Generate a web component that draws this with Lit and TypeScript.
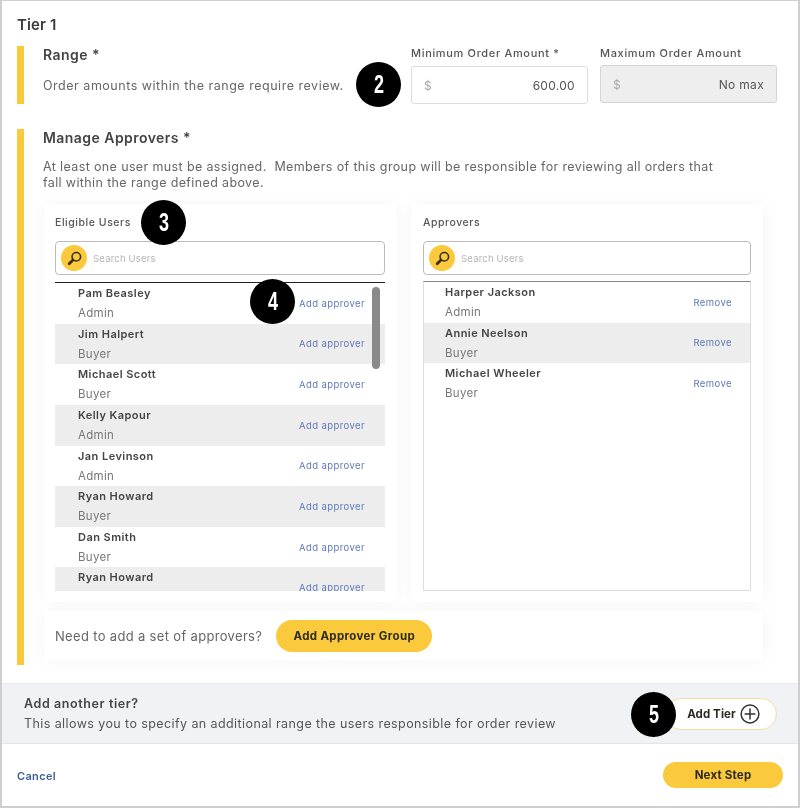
import { LitElement, html, css, svg } from "lit";
import { customElement } from "lit/decorators.js";

const ELIGIBLE = [
  ["Pam Beasley", "Admin"],
  ["Jim Halpert", "Buyer"],
  ["Michael Scott", "Buyer"],
  ["Kelly Kapour", "Admin"],
  ["Jan Levinson", "Admin"],
  ["Ryan Howard", "Buyer"],
  ["Dan Smith", "Buyer"],
  ["Ryan Howard", "Buyer"],
];
const APPROVERS = [
  ["Harper Jackson", "Admin"],
  ["Annie Neelson", "Buyer"],
  ["Michael Wheeler", "Buyer"],
];

const searchIcon = svg`<svg viewBox="0 0 16 16" width="17" height="17" fill="none" stroke="#3a2f14">
  <circle cx="9.7" cy="6.3" r="4" stroke-width="1.5"/>
  <path d="M6.6 9.4 3 13" stroke-width="2.6" stroke-linecap="round"/>
</svg>`;

const plusIcon = svg`<svg viewBox="0 0 20 20" width="20" height="20" fill="none" stroke="#333" stroke-width="1.5">
  <circle cx="10" cy="10" r="8.9"/>
  <path d="M10 4.6v10.8M4.6 10h10.8"/>
</svg>`;

@customElement("app-root")
export class AppRoot extends LitElement {
  static styles = css`
    :host { display: block; width: 800px; height: 808px; }
    * { box-sizing: border-box; }
    .page {
      position: relative; width: 800px; height: 808px; overflow: hidden;
      display: flex; flex-direction: column; background: #fff;
      border: 2px solid #cfcfcf; border-top-width: 1px;
      font-family: Inter, "Open Sans", sans-serif; color: #444;
    }
    .content { flex: 1; display: flex; flex-direction: column; filter: blur(0.45px); }
    .main { padding: 14px 0 0 15px; height: 682px; }
    .tier { font-size: 15px; font-weight: 600; line-height: 20px; color: #3c3c3c; letter-spacing: .1px; }
    .section { border-left: 7px solid #fbc93c; padding-left: 19px; }
    .range { margin-top: 11px; height: 58px; display: flex; }
    .range-text { width: 368px; }
    h3 { margin: 0; font-size: 14px; font-weight: 600; line-height: 18px; color: #444; letter-spacing: .45px; }
    .range-text p { margin: 13px 0 0; font-size: 12.5px; line-height: 18px; color: #666; letter-spacing: .52px; white-space: nowrap; }
    .fields { display: flex; gap: 12px; }
    .field { width: 177px; }
    .field label { display: block; font-size: 11px; line-height: 14px; color: #555; letter-spacing: .66px; white-space: nowrap; font-weight: 500; }
    .input {
      margin-top: 6px; height: 38px; border: 1px solid #ddd; border-radius: 3px;
      display: flex; align-items: center; justify-content: space-between; padding: 0 12px;
      font-size: 12px; color: #555; background: #fff; letter-spacing: .3px;
    }
    .input.off { margin-top: 5px; background: #eee; border-color: #d4d4d4; }
    .dollar { color: #aaa; }
    .manage { margin-top: 25px; height: 536px; }
    .manage > p { margin: 12px 0 0; width: 680px; font-size: 12.5px; line-height: 16px; color: #666; letter-spacing: .37px; }
    .cards {
      margin: 13px 0 0 1px; display: grid; grid-template-columns: 353px 352px; gap: 14px;
    }
    .card, .group { background: #fff; border-radius: 4px; box-shadow: 0 0 18px rgba(0,0,0,.045); }
    .card { height: 398px; padding: 12px 12px 11px 11px; display: flex; flex-direction: column; }
    .card.right { padding-left: 12px; }
    .card-title { font-size: 10.5px; line-height: 14px; color: #555; letter-spacing: .55px; font-weight: 500; }
    .search {
      margin-top: 11px; height: 34px; flex: none; border: 1px solid #bbb; border-radius: 4px;
      display: flex; align-items: center; gap: 6px; padding-left: 5px;
      font-size: 9.5px; color: #b5b5b5; letter-spacing: .2px;
    }
    .search-btn {
      width: 26px; height: 26px; border-radius: 50%; background: #fbc93c;
      display: flex; align-items: center; justify-content: center;
    }
    .list { margin-top: 7px; height: 309px; border-top: 1px solid #222; overflow: hidden; position: relative; }
    .card.right .list { margin-top: 6px; height: 310px; border: 1px solid #ddd; border-top: 1px solid #888; }
    .row {
      height: 40.65px; display: flex; align-items: center; justify-content: space-between;
      padding: 0 20px 0 23px;
    }
    .card.right .row { padding: 0 18px 0 21px; }
    .row:nth-child(even) { background: #ededed; }
    .who { align-self: flex-start; }
    .name { font-size: 11px; line-height: 20px; font-weight: 600; color: #444; letter-spacing: .45px; }
    .role { font-size: 11.5px; line-height: 20px; color: #777; letter-spacing: .3px; }
    .act { font-size: 9.5px; color: #5f78b8; letter-spacing: .42px; }
    .scroll { position: absolute; right: 5px; top: 4px; width: 8px; height: 82px; border-radius: 4px; background: #8a8a8a; }
    .group {
      margin: 9px 0 0 1px; width: 719px; height: 50px; padding-left: 11px;
      display: flex; align-items: center; gap: 14px;
      font-size: 13px; color: #666; letter-spacing: .33px;
    }
    button {
      font: inherit; border: none; background: #fbc93c; color: #2c2a22; font-weight: 700; border-radius: 16px;
      padding: 0; display: flex; align-items: center; justify-content: center;
    }
    .group button { width: 156px; height: 32px; font-size: 11.5px; letter-spacing: .35px; }
    .band {
      height: 61px; background: #f1f2f6; padding: 0 21px 0 22px;
      border-top: 1px solid #e9eaee; border-bottom: 1px solid #e4e5e8;
      display: flex; align-items: center; justify-content: space-between;
    }
    .band b { display: block; font-size: 12.5px; line-height: 20px; font-weight: 600; color: #444; letter-spacing: .6px; }
    .band span { display: block; font-size: 12.5px; line-height: 19px; color: #555; letter-spacing: .41px; }
    .add-tier {
      width: 112px; height: 32px; background: #fff; border: 1px solid #f3dfa3; gap: 4px; font-size: 11.5px; padding-left: 5px;
      letter-spacing: .1px;
    }
    .foot { flex: 1; display: flex; align-items: center; justify-content: space-between; padding: 0 15px; }
    .cancel { font-size: 11px; font-weight: 600; color: #3d5f96; letter-spacing: .35px; padding-top: 2px; }
    .next { width: 120px; height: 26px; font-size: 11.5px; letter-spacing: .2px; }
    .badge {
      position: absolute; width: 45px; height: 45px; border-radius: 50%; background: #000; color: #fff;
      display: flex; align-items: center; justify-content: center;
      font-family: "Liberation Sans", sans-serif; font-weight: 700; font-size: 25px;
    }
    .badge span { display: inline-block; transform: scaleX(.72); }
    .b2 { left: 354px; top: 61px; }
    .b3 { left: 139px; top: 199px; }
    .b4 { left: 248px; top: 278px; }
    .b5 { left: 629px; top: 691px; }
  `;

  private rows(items: string[][], action: string) {
    return items.map(
      ([n, r]) => html`<div class="row">
        <div class="who"><div class="name">${n}</div><div class="role">${r}</div></div>
        <div class="act">${action}</div>
      </div>`
    );
  }

  private search() {
    return html`<div class="search"><div class="search-btn">${searchIcon}</div>Search Users</div>`;
  }

  render() {
    return html`<div class="page">
      <div class="content">
        <div class="main">
          <div class="tier">Tier 1</div>
          <div class="section range">
            <div class="range-text">
              <h3>Range *</h3>
              <p>Order amounts within the range require review.</p>
            </div>
            <div class="fields">
              <div class="field">
                <label>Minimum Order Amount *</label>
                <div class="input"><span class="dollar">$</span><span>600.00</span></div>
              </div>
              <div class="field">
                <label>Maximum Order Amount</label>
                <div class="input off"><span class="dollar">$</span><span>No max</span></div>
              </div>
            </div>
          </div>
          <div class="section manage">
            <h3>Manage Approvers *</h3>
            <p>At least one user must be assigned.&nbsp; Members of this group will be responsible for reviewing all orders that fall within the range defined above.</p>
            <div class="cards">
              <div class="card">
                <div class="card-title">Eligible Users</div>
                ${this.search()}
                <div class="list">
                  ${this.rows(ELIGIBLE, "Add approver")}
                  <div class="scroll"></div>
                </div>
              </div>
              <div class="card right">
                <div class="card-title">Approvers</div>
                ${this.search()}
                <div class="list">${this.rows(APPROVERS, "Remove")}</div>
              </div>
            </div>
            <div class="group">Need to add a set of approvers? <button>Add Approver Group</button></div>
          </div>
        </div>
        <div class="band">
          <div>
            <b>Add another tier?</b>
            <span>This allows you to specify an additional range the users responsible for order review</span>
          </div>
          <button class="add-tier">Add Tier ${plusIcon}</button>
        </div>
        <div class="foot">
          <div class="cancel">Cancel</div>
          <button class="next">Next Step</button>
        </div>
      </div>
      <div class="badge b2"><span>2</span></div>
      <div class="badge b3"><span>3</span></div>
      <div class="badge b4"><span>4</span></div>
      <div class="badge b5"><span>5</span></div>
    </div>`;
  }
}
